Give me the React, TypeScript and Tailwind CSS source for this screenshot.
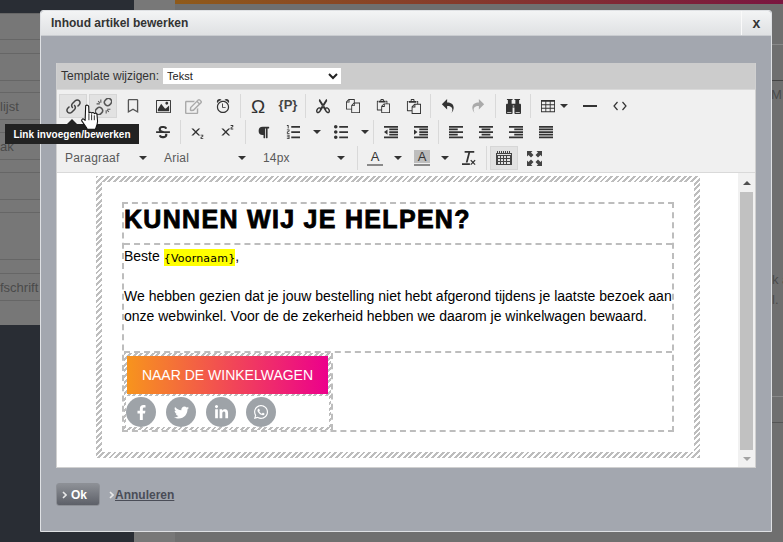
import type { ReactNode } from "react";
import {
  FaFacebookF,
  FaLinkedinIn,
  FaParagraph,
  FaRegBookmark,
  FaRegEdit,
  FaStrikethrough,
  FaTwitter,
  FaWhatsapp,
} from "react-icons/fa";
import {
  ImAlarm,
  ImBinoculars,
  ImBold,
  ImClearFormatting,
  ImCopy,
  ImImage,
  ImIndentDecrease,
  ImIndentIncrease,
  ImItalic,
  ImLink,
  ImList2,
  ImListNumbered,
  ImParagraphCenter,
  ImParagraphJustify,
  ImParagraphLeft,
  ImParagraphRight,
  ImPaste,
  ImRedo2,
  ImScissors,
  ImSubscript,
  ImSuperscript,
  ImTable2,
  ImUnderline,
  ImUndo2,
} from "react-icons/im";

function Btn({ children, active, wide }: { children: ReactNode; active?: boolean; wide?: boolean }) {
  return (
    <div
      className={
        "flex h-6 shrink-0 items-center justify-center text-[#333] mr-[2px] " +
        (wide ? "w-10 " : "w-7 ") +
        (active ? "bg-[#e2e2e2] border border-[#d6d6d6]" : "")
      }
    >
      {children}
    </div>
  );
}

function Sep() {
  return (
    <div className="flex h-6 w-[5px] shrink-0 justify-start pl-[1px]">
      <div className="h-full w-px bg-[#d9d9d9]" />
    </div>
  );
}

function Caret({ className = "" }: { className?: string }) {
  return <span className={"inline-block h-0 w-0 border-x-[4px] border-t-[4px] border-x-transparent border-t-[#333] " + className} />;
}

function ListBox({ label }: { label: string }) {
  return (
    <div className="flex h-6 w-[99px] shrink-0 items-center pl-[6px] pr-[11px] text-[12px] tracking-[0.2px] text-[#595959]">
      <span className="flex-1">{label}</span>
      <Caret />
    </div>
  );
}

function Row({ children }: { children: ReactNode }) {
  return <div className="flex h-[26px] items-start">{children}</div>;
}

function UnlinkIcon() {
  return (
    <svg width="17" height="17" viewBox="0 0 16 16" fill="none" stroke="#555" strokeWidth="1.4">
      <g transform="rotate(-45 8 8)">
        <rect x="-1.500" y="5" width="7" height="6" rx="3" />
        <rect x="10.500" y="5" width="7" height="6" rx="3" />
      </g>
      <path d="M5.500 1.500v3M1.500 5.500h3M10.500 14.500v-3M14.500 10.500h-3M3 3l1.500 1.500M13 13l-1.500-1.500" strokeWidth="1" />
    </svg>
  );
}

function Toolbar() {
  return (
    <div className="border-b border-[#d9d9d9] bg-[#f0f0f0] pl-[2px] pt-[4px]">
      <Row>
        <Btn active><ImLink size={15} className="text-[#444]" /></Btn>
        <Btn active><UnlinkIcon /></Btn>
        <Btn><FaRegBookmark size={14} className="text-[#555]" /></Btn>
        <Btn><ImImage size={15} /></Btn>
        <Btn><FaRegEdit size={17} className="text-[#aaa]" /></Btn>
        <Btn><ImAlarm size={14} /></Btn>
        <Sep />
        <Btn><span className="text-[19px] leading-none">Ω</span></Btn>
        <Btn><span className="pb-[3px] text-[13px] font-bold text-[#444]">{"{P}"}</span></Btn>
        <Sep />
        <Btn><ImScissors size={15} /></Btn>
        <Btn><ImCopy size={14} /></Btn>
        <Btn><ImPaste size={14} /></Btn>
        <Btn><ImPaste size={15} /></Btn>
        <Sep />
        <Btn><ImUndo2 size={14} /></Btn>
        <Btn><ImRedo2 size={14} className="text-[#aaa]" /></Btn>
        <Sep />
        <Btn><ImBinoculars size={15} /></Btn>
        <Sep />
        <Btn wide>
          <ImTable2 size={14} />
          <Caret className="ml-[5px]" />
        </Btn>
        <Btn><div className="h-[2px] w-[14px] bg-[#333]" /></Btn>
        <Btn>
          <svg width="14" height="10" viewBox="0 0 14 10" fill="none" stroke="#333" strokeWidth="1.2">
            <path d="M4.500 1 1 5l3.500 4M9.500 1 13 5 9.500 9" />
          </svg>
        </Btn>
      </Row>
      <Row>
        <Btn><ImBold size={13} /></Btn>
        <Btn><ImItalic size={13} /></Btn>
        <Btn><ImUnderline size={13} /></Btn>
        <Btn><FaStrikethrough size={14} /></Btn>
        <Sep />
        <Btn><ImSubscript size={14} /></Btn>
        <Btn><ImSuperscript size={14} /></Btn>
        <Sep />
        <Btn><FaParagraph size={13} /></Btn>
        <Btn><ImListNumbered size={14} /></Btn>
        <div className="flex h-6 w-[18px] items-center pl-[4px]"><Caret /></div>
        <Btn><ImList2 size={14} /></Btn>
        <div className="flex h-6 w-[15px] items-center pl-[4px]"><Caret /></div>
        <Sep />
        <Btn><ImIndentDecrease size={14} /></Btn>
        <Btn><ImIndentIncrease size={14} /></Btn>
        <Sep />
        <Btn><ImParagraphLeft size={14} /></Btn>
        <Btn><ImParagraphCenter size={14} /></Btn>
        <Btn><ImParagraphRight size={14} /></Btn>
        <Btn><ImParagraphJustify size={14} /></Btn>
      </Row>
      <Row>
        <ListBox label="Paragraaf" />
        <ListBox label="Arial" />
        <ListBox label="14px" />
        <Sep />
        <Btn>
          <span className="flex flex-col items-center text-[13px] leading-[13px] text-[#333]">
            A
            <span className="mt-px h-[2px] w-4 bg-[#8a8a8a]" />
          </span>
        </Btn>
        <div className="flex h-6 w-[17px] items-center pl-[3px]"><Caret /></div>
        <Btn>
          <span className="flex flex-col items-center text-[13px] leading-[13px] text-[#333]">
            <span className="w-4 bg-[#bdbdbd] text-center">A</span>
            <span className="mt-px h-[2px] w-4 bg-[#8a8a8a]" />
          </span>
        </Btn>
        <div className="flex h-6 w-[17px] items-center pl-[3px]"><Caret /></div>
        <Btn><ImClearFormatting size={14} /></Btn>
        <Sep />
        <Btn active>
          <svg width="16" height="14" viewBox="0 0 16 14" fill="#444">
            <path d="M0 2h16v12H0z" />
            <path fill="#e2e2e2" d="M1 3h14v1H1zM2 5h2v2H2zM5 5h2v2H5zM8 5h2v2H8zM11 5h3v2h-3zM2 8h2v2H2zM5 8h2v2H5zM8 8h2v2H8zM11 8h3v2h-3zM2 11h2v2H2zM5 11h2v2H5zM8 11h2v2H8zM11 11h3v2h-3z" />
            <path d="M1 0h1v2H1zM3 0h1v2H3zM5 0h1v2H5zM7 0h1v2H7zM9 0h1v2H9zM11 0h1v2h-1zM13 0h1v2h-1z" />
          </svg>
        </Btn>
        <Btn>
          <svg width="15" height="15" viewBox="0 0 15 15" fill="#444">
            <path d="M0 0h5.500L4 1.500 6.500 4 4 6.500 1.500 4 0 5.500zM15 0v5.500L13.500 4 11 6.500 8.500 4 11 1.500 9.500 0zM0 15V9.500L1.500 11 4 8.500 6.500 11 4 13.500 5.500 15zM15 15H9.500L11 13.500 8.500 11 11 8.500 13.500 11 15 9.500z" />
          </svg>
        </Btn>
      </Row>
    </div>
  );
}

const hatch =
  "bg-[repeating-linear-gradient(135deg,#bdbdbd_0,#bdbdbd_2px,#ffffff_2px,#ffffff_4px)]";

function SocialIcon({ children }: { children: ReactNode }) {
  return (
    <div className="flex h-[30px] w-[30px] items-center justify-center rounded-full bg-[#9ea3a8] text-white">
      {children}
    </div>
  );
}

function EmailContent() {
  return (
    <div className="min-w-0 flex-1 bg-white pl-[39px] pt-[3px]">
      <div className={hatch + " h-[282px] w-[604px] p-[6px]"}>
        <div className="h-full bg-white px-5 pt-5">
          <div className="flex h-[230px] flex-col border-2 border-dashed border-[#bdbdbd] text-[14px] leading-[20px] text-black">
            <div className="h-[41px] shrink-0 border-b-2 border-dashed border-[#bdbdbd]">
              <h1 className="text-[25px] leading-[31px] font-bold tracking-[1.3px] [-webkit-text-stroke:0.8px_black]">
                KUNNEN WIJ JE HELPEN?
              </h1>
            </div>
            <div className="h-[108px] shrink-0 border-b-2 border-dashed border-[#bdbdbd] pt-px">
              <p className="h-[20px]">
                Beste{" "}
                <span className="inline-block h-[17px] bg-[#ffff00] align-[-1px] font-['DejaVu_Sans',sans-serif] text-[11px] leading-[19px] tracking-[0.2px]">
                  {"{Voornaam}"}
                </span>
                ,
              </p>
              <p className="mt-[20px]">
                We hebben gezien dat je jouw bestelling niet hebt afgerond tijdens je laatste bezoek aan onze webwinkel. Voor de de zekerheid hebben we daarom je winkelwagen bewaard.
              </p>
            </div>
            <div className="flex flex-1">
              <div className={hatch + " w-[207px] pl-[2px] pr-[2px] pt-[3px] pb-[3px]"}>
                <div className="mb-[2px] ml-px flex h-[38px] w-[201px] items-center justify-center bg-[linear-gradient(90deg,#f7941d,#ec008c)] text-white">
                  NAAR DE WINKELWAGEN
                </div>
                <div className="flex h-[31px] gap-[10px] bg-white pt-[1px]">
                  <SocialIcon><FaFacebookF size={15} /></SocialIcon>
                  <SocialIcon><FaTwitter size={15} /></SocialIcon>
                  <SocialIcon><FaLinkedinIn size={15} /></SocialIcon>
                  <SocialIcon><FaWhatsapp size={16} /></SocialIcon>
                </div>
              </div>
              <div className="flex-1 border-l-2 border-dashed border-[#bdbdbd]" />
            </div>
          </div>
        </div>
      </div>
    </div>
  );
}

function Scrollbar() {
  return (
    <div className="flex w-[17px] shrink-0 flex-col items-center bg-[#f1f1f1] pt-[8px] pb-[6px]">
      <span className="h-0 w-0 border-x-[4px] border-b-[4px] border-x-transparent border-b-[#505050]" />
      <div className="my-[7px] w-[13px] flex-1 bg-[#c1c1c1]" />
      <span className="h-0 w-0 border-x-[4px] border-t-[4px] border-x-transparent border-t-[#a3a3a3]" />
    </div>
  );
}

function Chevron() {
  return (
    <svg width="5" height="8" viewBox="0 0 5 8" fill="none" stroke="#e8e8e8" strokeWidth="1.6">
      <path d="M1 1l3 3-3 3" />
    </svg>
  );
}

function Modal() {
  return (
    <div className="absolute left-[40px] top-[10px] h-[522px] w-[732px] rounded-t-[3px] border border-[#dfe1e4] bg-[#a3a7af]">
      <div className="flex h-[25px] items-center justify-between rounded-t-[3px] border-b border-[#c9ccd0] bg-[linear-gradient(#f3f4f5,#dfe1e3)]">
        <span className="pl-[10px] text-[12px] font-bold text-[#333]">Inhoud artikel bewerken</span>
        <span className="flex h-full w-[30px] items-center justify-center border-l border-[#fafafa] text-[14px] font-bold text-[#333]">x</span>
      </div>

      <div className="ml-[15px] mt-[27px] w-[700px] border-x border-b border-[#d0d0d0]">
        <div className="flex h-[27px] items-center border-b border-[#d9d9d9] bg-[#cccccc] pl-[4px] text-[12px] text-[#333]">
          <span>Template wijzigen:</span>
          <select className="ml-[4px] h-4 w-[178px] bg-white text-[11px] text-[#222]" defaultValue="Tekst">
            <option>Tekst</option>
          </select>
        </div>
        <Toolbar />
        <div className="flex h-[294px]">
          <EmailContent />
          <Scrollbar />
        </div>
      </div>

      <div className="ml-[15px] mt-[15px] flex items-center">
        <div className="flex h-[23px] w-[44px] items-center gap-[4px] rounded-[3px] border border-[#8d9096] bg-[linear-gradient(#8d9096,#5d6068)] pl-[5px] text-[12px] font-bold text-white">
          <Chevron />
          Ok
        </div>
        <div className="ml-[9px] flex items-center gap-px text-[12px] font-bold text-[#4a4d57]">
          <Chevron />
          <span className="underline">Annuleren</span>
        </div>
      </div>
    </div>
  );
}

function HandCursor() {
  return (
    <svg className="absolute left-[80px] top-[104px]" width="20" height="27" viewBox="0 0 18 25">
      <path
        d="M5 1.500c1-.8 2.400-.5 2.800.8l.2 6c.4-1 2.200-1 2.500.2.500-.9 2.200-.8 2.500.4.600-.7 2.300-.4 2.500 1l.5 6c0 3-1 5-2 7.500H6.500c-1-2.500-3-4.500-5-7.500-.8-1.300.6-2.800 2-1.700l1 1z"
        fill="#fff"
        stroke="#111"
        strokeWidth="1"
        strokeLinejoin="round"
      />
      <path d="M8 9v6M10.500 9.500V15M13 10.500V15" stroke="#111" strokeWidth="0.8" fill="none" />
    </svg>
  );
}

function Tooltip() {
  return (
    <div className="absolute left-[5px] top-[119px] flex flex-col">
      <span className="ml-[62px] h-0 w-0 border-x-[5px] border-b-[5px] border-x-transparent border-b-[#222]" />
      <div className="flex h-[20px] w-[134px] items-center justify-center bg-[#222] text-[10px] font-bold tracking-[0.05px] text-white">
        Link invoegen/bewerken
      </div>
    </div>
  );
}

function PageBehind() {
  const sideRows: { h: number; mt: number; text?: string }[] = [
    { h: 27, mt: 13 },
    { h: 28, mt: 13 },
    { h: 28, mt: 11, text: "lijst" },
    { h: 28, mt: 12, text: "ak" },
    { h: 28, mt: 12 },
    { h: 48, mt: 12 },
    { h: 28, mt: 13, text: "fschrift" },
  ];

  return (
    <div className="grid h-[542px] w-[783px] grid-cols-[134px_41px_1fr] overflow-hidden bg-[#292d34] text-[#4a4a4a]">
      <div>
        <div className="h-[312px] w-[94px] bg-[#777777]">
          {sideRows.map((row, i) => (
            <div
              key={i}
              className="flex items-center border-y border-[#666] pt-[2px] text-[13px] whitespace-nowrap"
              style={{ height: row.h, marginTop: row.mt }}
            >
              {row.text}
            </div>
          ))}
        </div>
      </div>
      <div className="bg-[#787878]" />
      <div className="flex flex-col bg-[#6f6f6f] text-[13px] whitespace-nowrap">
        <div className="h-[4px] bg-[linear-gradient(90deg,#8f5a1a,#7a1540)]" />
        <div className="mt-[40px] h-[37px] border-y border-b-[#444] border-t-[#888]" />
        <div className="h-[30px] pl-[596px] pt-[4px]">M</div>
        <div className="mt-[159px] h-[40px] pl-[597px] leading-[20px]">k a<br />l.</div>
        <div className="mt-[86px] h-[27px] border-y border-b-[#555] border-t-[#888]" />
      </div>
    </div>
  );
}

export default function App() {
  return (
    <div className="relative h-[542px] w-[783px] overflow-hidden font-['Liberation_Sans',Arial,sans-serif]">
      <PageBehind />
      <Modal />
      <Tooltip />
      <HandCursor />
    </div>
  );
}
